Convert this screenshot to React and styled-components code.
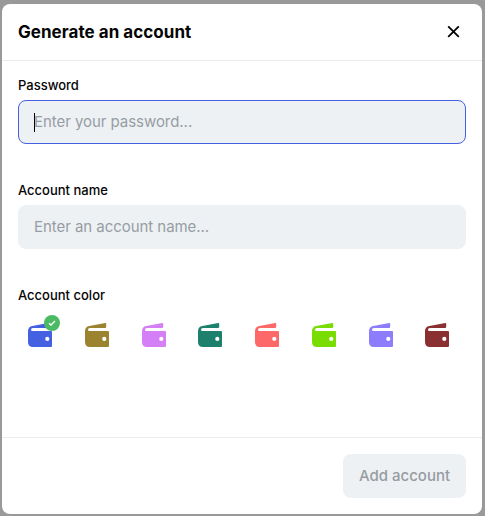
import React from "react";
import styled, { createGlobalStyle } from "styled-components";

const GlobalStyle = createGlobalStyle`
  * { box-sizing: border-box; }
  body {
    margin: 0;
    background: #999999;
    font-family: Inter, sans-serif;
    color: #050505;
  }
`;

const Overlay = styled.div`
  height: 100vh;
  padding: 4px 3px 2px 2px;
  overflow: hidden;
`;

const Dialog = styled.section`
  display: flex;
  flex-direction: column;
  height: 100%;
  background: #ffffff;
  border-radius: 8px;
`;

const Header = styled.header`
  display: flex;
  align-items: center;
  justify-content: space-between;
  height: 57px;
  padding: 0 20px 0 16px;
  border-bottom: 1px solid #ebeced;
`;

const Title = styled.h1`
  margin: 0;
  font-size: 17px;
  line-height: 24px;
  font-weight: 700;
  letter-spacing: 0.04px;
`;

const CloseButton = styled.button`
  display: flex;
  padding: 0;
  border: 0;
  background: none;
  color: #000000;
`;

const Form = styled.form`
  display: flex;
  flex: 1;
  flex-direction: column;
  padding: 14px 16px 0;
`;

const Field = styled.div`
  height: 105px;
`;

const Label = styled.div`
  margin-bottom: 5px;
  font-size: 13px;
  line-height: 20px;
  font-weight: 500;
`;

const InputBox = styled.div`
  display: flex;
  align-items: center;
  height: 44px;
  padding: 0 15px;
  border: 1px solid ${({ $focused }) => ($focused ? "#4361e1" : "#edf1f4")};
  border-radius: 8px;
  background: #edf1f4;
`;

const Caret = styled.span`
  width: 1px;
  height: 19px;
  margin-right: -1px;
  background: #000000;
`;

const Placeholder = styled.span`
  font-size: 15px;
  line-height: 20px;
  letter-spacing: -0.05px;
  color: #979da3;
`;

const Palette = styled.div`
  display: flex;
  justify-content: space-between;
  padding: 13px 16.7px 0 10px;
`;

const Swatch = styled.div`
  position: relative;
  display: flex;
  color: ${({ $color }) => $color};
`;

const Badge = styled.span`
  position: absolute;
  top: -8px;
  right: -8px;
  display: flex;
  color: #4bbb63;
`;

const Footer = styled.footer`
  display: flex;
  justify-content: flex-end;
  padding: 16px;
  border-top: 1px solid #ebeced;
`;

const SubmitButton = styled.button`
  width: 123px;
  height: 44px;
  padding: 0;
  border: 0;
  border-radius: 8px;
  background: #edf1f4;
  color: #969ca1;
  font: 500 15px/20px Inter, sans-serif;
`;

const CloseIcon = () => (
  <svg width="18" height="18" viewBox="0 0 18 18" fill="none" stroke="currentColor" strokeWidth="1.8">
    <path d="M4.2 3.3 14.8 13.9M14.8 3.3 4.2 13.9" />
  </svg>
);

const WalletIcon = () => (
  <svg width="24" height="24" viewBox="0 0 24 24" fill="currentColor">
    <path
      fillRule="evenodd"
      d="M4.3 2.9 20.3.1Q21.2 0 21.2.9V4.1Q21.2 4.9 20.4 4.9H5Q3 4.9 3 6.4T4.3 8H23Q24 8 24 9V23Q24 24 23 24H5Q0 24 0 19V8Q0 3.6 4.3 2.9ZM19.3 13.8A2.1 2.1 0 1 0 19.3 18A2.1 2.1 0 1 0 19.3 13.8Z"
    />
  </svg>
);

const CheckIcon = () => (
  <svg width="16" height="16" viewBox="0 0 16 16">
    <circle cx="8" cy="8" r="8" fill="currentColor" />
    <path d="m5 8.2 2 1.9 4-4" fill="none" stroke="#ffffff" strokeWidth="1.4" />
  </svg>
);

const colors = ["#4361e1", "#9b832f", "#d47ff6", "#1d806d", "#fd6868", "#79dc02", "#8d7cfb", "#8a3033"];

export default function App() {
  return (
    <>
      <GlobalStyle />
      <Overlay>
        <Dialog>
          <Header>
            <Title>Generate an account</Title>
            <CloseButton type="button" aria-label="Close">
              <CloseIcon />
            </CloseButton>
          </Header>
          <Form>
            <Field>
              <Label>Password</Label>
              <InputBox $focused>
                <Caret />
                <Placeholder>Enter your password...</Placeholder>
              </InputBox>
            </Field>
            <Field>
              <Label>Account name</Label>
              <InputBox>
                <Placeholder>Enter an account name...</Placeholder>
              </InputBox>
            </Field>
            <Label>Account color</Label>
            <Palette>
              {colors.map((color, index) => (
                <Swatch key={color} $color={color}>
                  <WalletIcon />
                  {index === 0 && (
                    <Badge>
                      <CheckIcon />
                    </Badge>
                  )}
                </Swatch>
              ))}
            </Palette>
          </Form>
          <Footer>
            <SubmitButton type="button">Add account</SubmitButton>
          </Footer>
        </Dialog>
      </Overlay>
    </>
  );
}
